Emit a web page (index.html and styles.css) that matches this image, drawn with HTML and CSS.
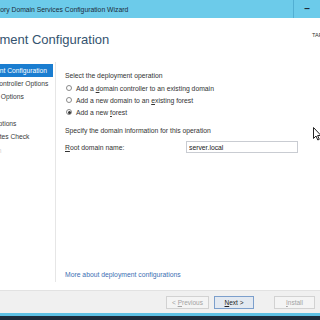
FILE: index.html
```html
<!DOCTYPE html>
<html>
  <head>
    <meta charset="utf-8">
    <title>Active Directory Domain Services Configuration Wizard</title>
    <link rel="stylesheet" href="styles.css">
  </head>
  <body>
    <div id="wizard">
      <div id="titlebar">
        <span id="title">Active Directory Domain Services Configuration Wizard</span>
        <span class="caption_button">&ndash;</span>
        <span class="caption_button"></span>
      </div>
      <div id="header">
        <h1>Deployment Configuration</h1>
        <p id="target">TARGET SERVER</p>
      </div>
      <div id="body">
        <ul id="steps">
          <li class="step current">Deployment Configuration</li>
          <li class="step">Domain Controller Options</li>
          <li class="step">Additional Options</li>
          <li class="step">Paths</li>
          <li class="step">Review Options</li>
          <li class="step">Prerequisites Check</li>
          <li class="step disabled">Installation</li>
          <li class="step disabled">Results</li>
        </ul>
        <div id="page">
          <p class="line">Select the deployment operation</p>
          <label class="option">
            <input type="radio" name="operation">
            <span class="radio"></span>
            <span>Add a <u>d</u>omain controller to an existing domain</span>
          </label>
          <label class="option">
            <input type="radio" name="operation">
            <span class="radio"></span>
            <span>Add a new domain to an <u>e</u>xisting forest</span>
          </label>
          <label class="option">
            <input type="radio" name="operation" checked>
            <span class="radio"></span>
            <span>Add a new <u>f</u>orest</span>
          </label>
          <p class="line spaced">Specify the domain information for this operation</p>
          <div class="field">
            <label for="root_domain"><u>R</u>oot domain name:</label>
            <input type="text" id="root_domain" value="server.local">
          </div>
          <a href="#" id="more">More about deployment configurations</a>
        </div>
      </div>
      <div id="gap"></div>
      <div id="footer">
        <button disabled>&lt; <u>P</u>revious</button>
        <button class="default"><u>N</u>ext &gt;</button>
        <button class="wide_gap" disabled><u>I</u>nstall</button>
        <button>Cancel</button>
      </div>
    </div>
    <div id="taskbar"></div>
    <svg id="cursor" width="9" height="14" viewBox="0 0 9 14">
      <path d="M0.5 0.5 L0.5 11.5 L3 9 L4.8 13 L6.3 12.3 L4.6 8.5 L8 8.5 Z" fill="#fff" stroke="#222" stroke-width="1"/>
    </svg>
  </body>
</html>
```

FILE: styles.css
```css
body {
  margin: 0;
  width: 320px;
  height: 320px;
  overflow: hidden;
  position: relative;
  font-family: 'Liberation Sans', Arial, sans-serif;
  background: #1b2a3a;
}

#wizard {
  width: 410px;
  margin-left: -40px;
  background: #ffffff;
  border-bottom: 3px solid #5dc0e4;
}

#titlebar {
  height: 18px;
  display: flex;
  align-items: center;
  background: #6ccbea;
  color: #1c2c3a;
}

#title {
  flex: 1;
  padding-left: 2px;
  font-size: 6.8px;
  white-space: nowrap;
}

.caption_button {
  width: 26px;
  height: 18px;
  border-left: 1px solid #52afd3;
  text-align: center;
  font-size: 10px;
  font-weight: bold;
  line-height: 18px;
}

.caption_button:last-child {
  width: 49px;
}

#header {
  height: 44px;
  display: flex;
}

h1 {
  flex: 1;
  margin: 13px 0 0 -1px;
  font-size: 13px;
  font-weight: normal;
  line-height: 17px;
  color: #34536f;
  white-space: nowrap;
}

#target {
  width: 58px;
  margin: 14px 0 0 0;
  font-size: 5.6px;
  color: #333;
  white-space: nowrap;
}

#body {
  height: 220px;
  display: flex;
}

#steps {
  list-style: none;
  width: 96px;
  margin: 0;
  padding: 1.5px 0 0 0;
  border-right: 1px solid #e6e6e6;
  box-sizing: border-box;
}

.step {
  width: 93px;
  height: 13.4px;
  padding-left: 9.6px;
  box-sizing: border-box;
  font-size: 6.7px;
  line-height: 13.4px;
  color: #3a3a3a;
  white-space: nowrap;
  overflow: hidden;
}

.step.current {
  background: #1a7dd0;
  color: #ffffff;
}

.step.disabled {
  color: #d4d4d4;
}

#page {
  flex: 1;
  display: flex;
  flex-direction: column;
  padding: 8px 0 1px 9px;
  font-size: 6.8px;
  color: #333;
}

.line {
  margin: 0;
  line-height: 12px;
  white-space: nowrap;
}

.line.spaced {
  margin-top: 7px;
}

.option {
  display: flex;
  align-items: center;
  height: 12px;
  white-space: nowrap;
  cursor: pointer;
}

.option input {
  position: absolute;
  opacity: 0;
  width: 0;
  height: 0;
}

.radio {
  width: 6px;
  height: 6px;
  margin: 0 4px 0 1px;
  border: 1px solid #8a8a8a;
  border-radius: 50%;
  box-sizing: border-box;
  background: #fff;
  display: flex;
  align-items: center;
  justify-content: center;
}

.option input:checked ~ .radio::after {
  content: "";
  width: 3px;
  height: 3px;
  border-radius: 50%;
  background: #333;
}

.field {
  display: flex;
  align-items: center;
  margin-top: 4px;
  height: 12px;
}

.field label {
  width: 121px;
}

.field input {
  width: 112px;
  height: 12px;
  box-sizing: border-box;
  border: 1px solid #c9ccd2;
  padding: 0 2px;
  font-family: inherit;
  font-size: 6.8px;
  color: #222;
}

#more {
  margin-top: auto;
  line-height: 12px;
  color: #3d6fb3;
  text-decoration: none;
  white-space: nowrap;
}

#gap {
  height: 8px;
}

#footer {
  height: 23px;
  box-sizing: border-box;
  display: flex;
  justify-content: flex-end;
  gap: 5px;
  padding: 5px 9px 0 0;
  border-top: 1px solid #e2e2e2;
  background: #f0f0f0;
}

#footer button {
  width: 41px;
  height: 13px;
  padding: 0;
  border: 1px solid #acacac;
  background: #e5e5e5;
  font-family: inherit;
  font-size: 6.5px;
  color: #222;
}

#footer button:first-child {
  width: 43px;
}

#footer button.default {
  width: 40px;
  border-color: #7c9fcc;
  background: #e3e9f1;
}

#footer button.wide_gap {
  margin-left: 15px;
}

#footer button:disabled {
  border-color: #d2d2d2;
  background: #f4f4f4;
  color: #a3a3a3;
}

#taskbar {
  height: 4px;
  background: #1b2a3a;
}

#cursor {
  position: absolute;
  left: 313px;
  top: 127px;
}
```
